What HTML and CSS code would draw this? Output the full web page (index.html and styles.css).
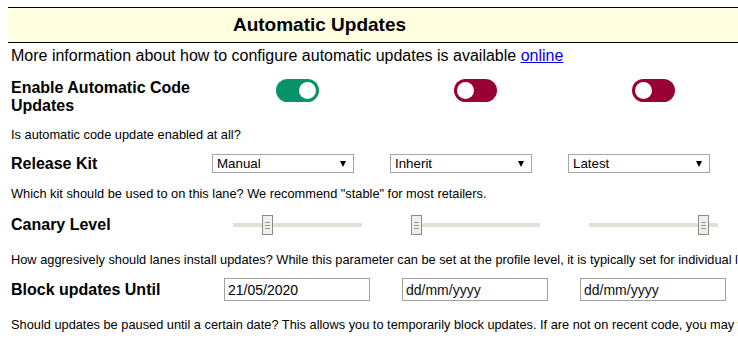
FILE: index.html
```html
<!DOCTYPE html>
<html lang="en">
<head>
  <meta charset="UTF-8" />
  <title>Automatic Updates</title>
  <link rel="stylesheet" href="styles.css">
</head>
<body>
  <div class="header">
    <h1 class="title">Automatic Updates</h1>
  </div>
  <p class="intro">More information about how to configure automatic updates is available <a href="#">online</a></p>

  <div class="row row-top">
    <div class="label">Enable Automatic Code Updates</div>
    <div class="cell center"><span class="toggle on"></span></div>
    <div class="cell center"><span class="toggle"></span></div>
    <div class="cell center"><span class="toggle"></span></div>
  </div>
  <p class="desc desc-first">Is automatic code update enabled at all?</p>

  <div class="row row-kit">
    <div class="label">Release Kit</div>
    <div class="cell">
      <span class="select"><select><option>Manual</option></select><span class="arrow"></span></span>
    </div>
    <div class="cell">
      <span class="select"><select><option>Inherit</option></select><span class="arrow"></span></span>
    </div>
    <div class="cell">
      <span class="select"><select><option>Latest</option></select><span class="arrow"></span></span>
    </div>
  </div>
  <p class="desc">Which kit should be used to on this lane? We recommend "stable" for most retailers.</p>

  <div class="row row-canary">
    <div class="label">Canary Level</div>
    <div class="cell center"><input type="range" min="0" max="100" value="25" /></div>
    <div class="cell center"><input type="range" min="0" max="100" value="0" /></div>
    <div class="cell center"><input type="range" min="0" max="100" value="93" /></div>
  </div>
  <p class="desc">How aggresively should lanes install updates? While this parameter can be set at the profile level, it is typically set for individual lanes.</p>

  <div class="row row-date">
    <div class="label">Block updates Until</div>
    <div class="cell center"><input class="date" type="text" value="21/05/2020" placeholder="dd/mm/yyyy" /></div>
    <div class="cell center"><input class="date" type="text" placeholder="dd/mm/yyyy" /></div>
    <div class="cell center"><input class="date" type="text" placeholder="dd/mm/yyyy" /></div>
  </div>
  <p class="desc">Should updates be paused until a certain date? This allows you to temporarily block updates. If are not on recent code, you may want to update first.</p>
</body>
</html>
```

FILE: styles.css
```css
html, body {
  overflow: hidden;
}
body {
  margin: 0;
  padding: 7px 0 0 8px;
  font-family: "Liberation Sans", Arial, sans-serif;
  color: #000;
  background: #fff;
}
.header {
  width: 734px;
  height: 34px;
  background-color: #ffffe0;
  border-top: 1px solid #000;
  border-bottom: 1px solid #000;
  display: flex;
  align-items: center;
}
.title {
  width: 623px;
  margin: 0;
  font-size: 19px;
  text-align: center;
}
.intro {
  margin: 4px 0 0;
  padding-left: 3px;
  font-size: 16px;
  line-height: 18px;
  white-space: nowrap;
}
.intro a {
  color: #0000ee;
}
.row {
  display: grid;
  grid-template-columns: 200px 178px 178px 178px;
  align-items: center;
  margin-top: 11px;
}
.row-top {
  align-items: start;
  margin-top: 14px;
}
.row-canary {
  margin-top: 13px;
  padding-bottom: 4px;
}
.row-date {
  margin-top: 10px;
  padding-bottom: 3px;
}
.label {
  padding-left: 3px;
  font-size: 16px;
  font-weight: bold;
  line-height: 18px;
}
.cell {
  display: flex;
  align-items: center;
}
.cell.center {
  justify-content: center;
}
.desc {
  margin: 13px 0 0;
  padding-left: 3px;
  font-size: 12.8px;
  line-height: 16px;
  white-space: nowrap;
}
.desc-first {
  margin-top: 12px;
}

/* toggles */
.toggle {
  width: 43px;
  height: 23px;
  box-sizing: border-box;
  padding: 3px;
  border-radius: 12px;
  background-color: #990033;
  display: flex;
  justify-content: flex-start;
}
.toggle::after {
  content: "";
  width: 17px;
  height: 17px;
  border-radius: 50%;
  background: #fff;
}
.toggle.on {
  background-color: #079367;
  justify-content: flex-end;
}

/* selects */
.select {
  margin-left: 4px;
  width: 142px;
  height: 19px;
  box-sizing: border-box;
  border: 1px solid #a6a6a6;
  display: flex;
  align-items: center;
  background: #fff;
}
.select select {
  flex: 1;
  -webkit-appearance: none;
  appearance: none;
  border: none;
  background: transparent;
  padding: 0 0 0 4px;
  font-family: "Liberation Sans", Arial, sans-serif;
  font-size: 13.33px;
  color: #000;
  outline: none;
}
.arrow {
  width: 0;
  height: 0;
  margin: 1px 7px 0 0;
  border-left: 3px solid transparent;
  border-right: 3px solid transparent;
  border-top: 6px solid #000;
}

/* sliders */
input[type=range] {
  -webkit-appearance: none;
  appearance: none;
  width: 129px;
  height: 20px;
  margin: 0;
  background: transparent;
}
input[type=range]::-webkit-slider-runnable-track {
  height: 4px;
  background: #e2ded8;
}
input[type=range]::-webkit-slider-thumb {
  -webkit-appearance: none;
  width: 11px;
  height: 20px;
  margin-top: -8px;
  box-sizing: border-box;
  border: 1px solid #8e8882;
  background-color: #f1efec;
  background-image:
    linear-gradient(#9a948f, #9a948f),
    linear-gradient(#9a948f, #9a948f),
    linear-gradient(#9a948f, #9a948f);
  background-repeat: no-repeat;
  background-size: 5px 1px;
  background-position: 2px 6px, 2px 9px, 2px 12px;
}

/* date fields */
.date {
  width: 146px;
  height: 23px;
  box-sizing: border-box;
  margin: 0;
  padding: 0 3px;
  border: 1px solid #a0a0a0;
  font-family: "Liberation Sans", Arial, sans-serif;
  font-size: 14px;
  color: #000;
}
.date::placeholder {
  color: #111;
  opacity: 1;
}
```
